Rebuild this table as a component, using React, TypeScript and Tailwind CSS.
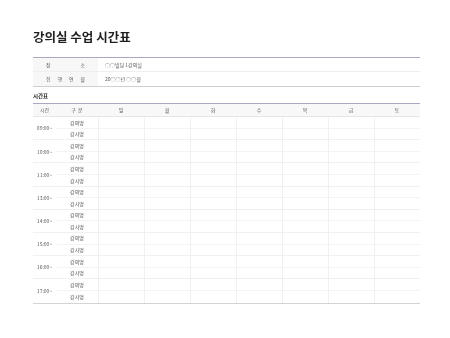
import React from "react";

const days = ["일", "월", "화", "수", "목", "금", "토"];
const times = ["09:00~", "10:00~", "11:00~", "13:00~", "14:00~", "15:00~", "16:00~", "17:00~"];

const font = { fontFamily: '"Noto Sans CJK KR", "Noto Sans", sans-serif' };

function Spread({ chars }: { chars: string[] }) {
  return (
    <div className="flex justify-between px-[13px]">
      {chars.map((c, i) => (
        <span key={i}>{c}</span>
      ))}
    </div>
  );
}

export default function App() {
  return (
    <div
      className="w-[450px] h-[338px] bg-white pl-[33px] pt-[28px] text-[#595959] will-change-transform antialiased"
      style={font}
    >
      {/* 제목 */}
      <h1 className="h-[18px] text-[12.5px] leading-[18px] font-bold text-[#1f1f1f]">강의실 수업 시간표</h1>

      {/* 기본 정보 */}
      <div className="mt-[11px] w-[387px] border-t border-t-[#aaa7c2] border-b border-b-[#cfcfcf] text-[5px]">
        <div className="flex h-[14px] items-center border-b border-b-[#efefef]">
          <div className="w-[65px] h-full flex flex-col justify-center bg-[#f7f7f7]">
            <Spread chars={["장", "소"]} />
          </div>
          <div className="pl-[7px]">○○빌딩 1강의실</div>
        </div>
        <div className="flex h-[14px] items-center">
          <div className="w-[65px] h-full flex flex-col justify-center bg-[#f7f7f7]">
            <Spread chars={["진", "행", "연", "월"]} />
          </div>
          <div className="pl-[7px]">20○○년 ○○월</div>
        </div>
      </div>

      {/* 시간표 */}
      <div className="mt-[5px] h-[8px] leading-[8px] text-[5.5px] font-bold text-[#222]">시간표</div>

      <div className="mt-[3px] w-[387px] border-t border-t-[#aaa7c2] border-b border-b-[#d4d4d4] text-[5px]">
        <div className="grid grid-cols-[23px_42px_repeat(7,1fr)] h-[13px] items-center bg-[#f8f8f8] border-b border-b-[#e6e6e6]">
          <div className="text-center">시간</div>
          <div className="text-center">구&nbsp;&nbsp;분</div>
          {days.map((d) => (
            <div key={d} className="text-center">
              {d}
            </div>
          ))}
        </div>

        <div className="grid grid-cols-[23px_42px_repeat(7,1fr)] auto-rows-[11.6px]">
          {times.map((t, i) => (
            <React.Fragment key={t}>
              <div
                className={`row-span-2 flex items-center justify-center ${
                  i < times.length - 1 ? "border-b border-b-[#f0f0f0]" : ""
                }`}
              >
                {t}
              </div>
              <div className="flex items-center justify-center border-b border-b-[#f3f3f3]">강의명</div>
              {days.map((d) => (
                <div key={d + "a"} className="border-l border-l-[#f0f0f0] border-b border-b-[#f3f3f3]" />
              ))}
              <div
                className={`flex items-center justify-center ${
                  i < times.length - 1 ? "border-b border-b-[#f0f0f0]" : ""
                }`}
              >
                강사명
              </div>
              {days.map((d) => (
                <div
                  key={d + "b"}
                  className={`border-l border-l-[#f0f0f0] ${
                    i < times.length - 1 ? "border-b border-b-[#f0f0f0]" : ""
                  }`}
                />
              ))}
            </React.Fragment>
          ))}
        </div>
      </div>
    </div>
  );
}
